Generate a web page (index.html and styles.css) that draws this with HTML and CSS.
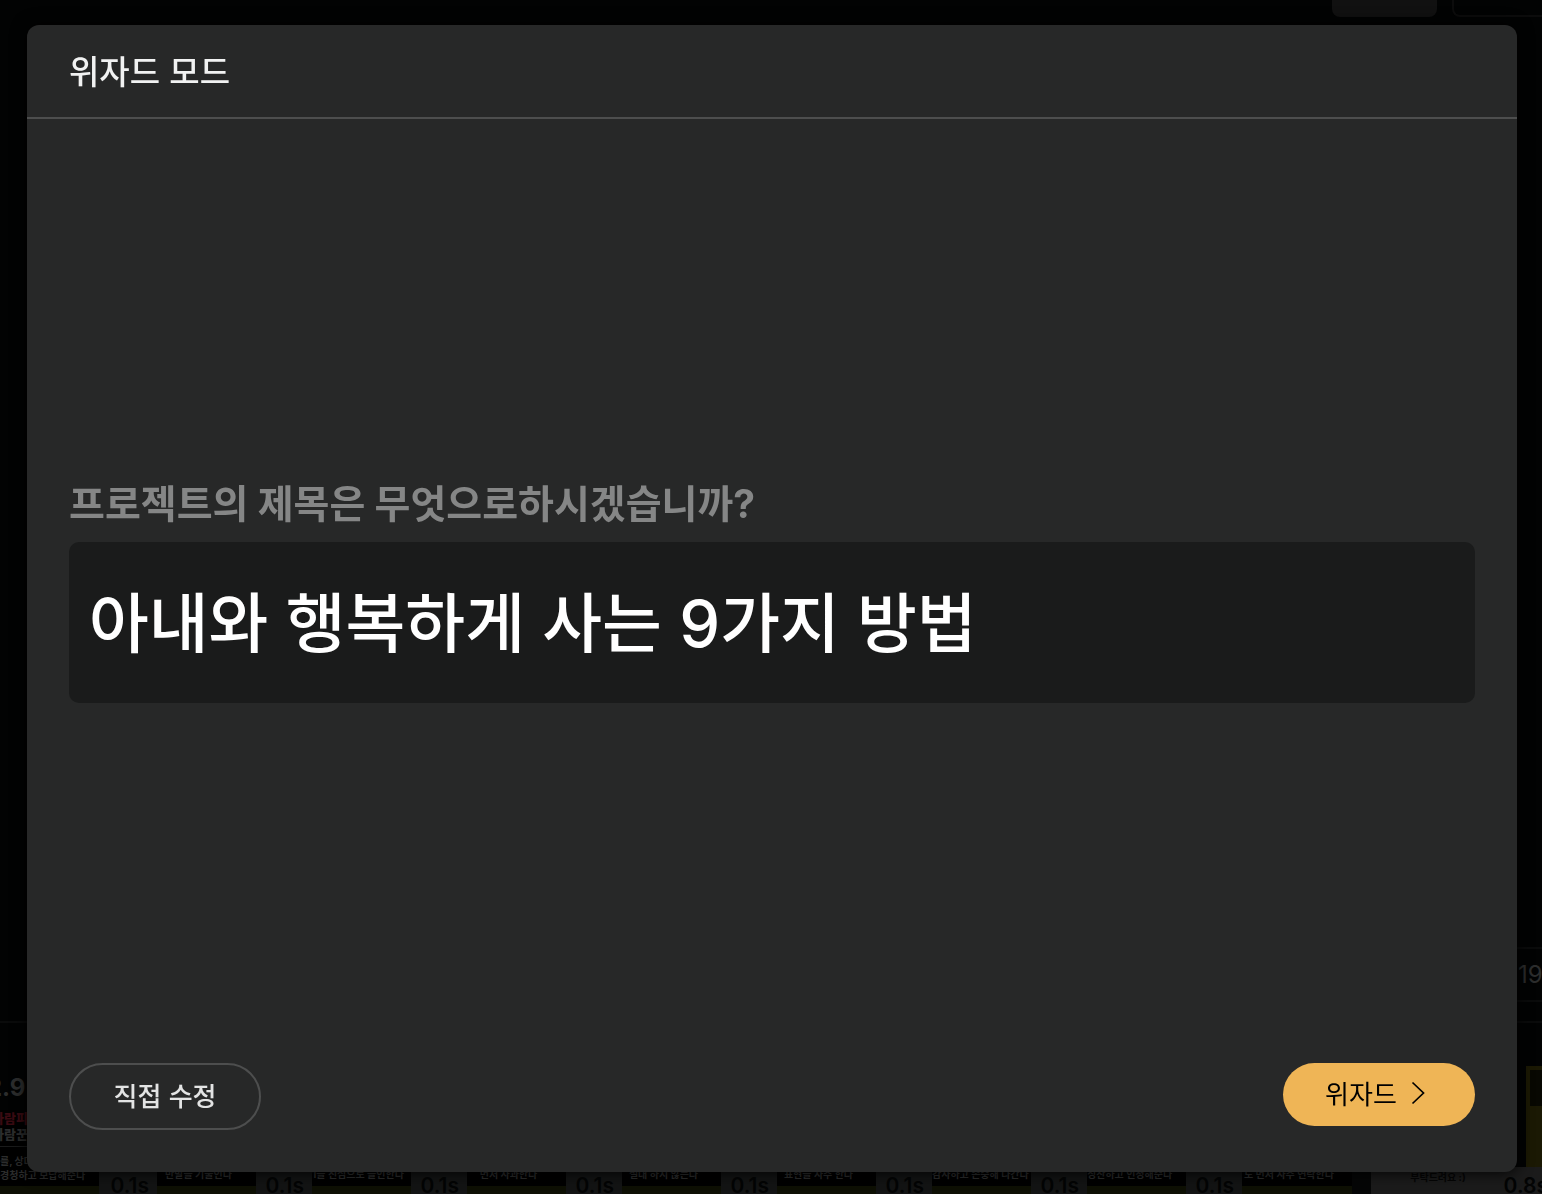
FILE: index.html
```html
<!DOCTYPE html>
<html lang="ko">
<head>
    <meta charset="UTF-8">
    <meta name="viewport" content="width=device-width, initial-scale=1.0">
    <title>위자드 모드</title>
    <link rel="stylesheet" href="styles.css">
</head>
<body>
    <div class="editor" aria-hidden="true">
        <div class="topbar">
            <div class="tool filled"></div>
            <div class="tool"></div>
        </div>
        <div class="canvas"></div>
        <div class="controls"><span class="frame">19</span></div>
        <div class="timeline">
            <div class="clip first">
                <div class="title">2.9</div>
                <div class="thumb">
                    <p class="red">사람피</p>
                    <p class="white">사람꾼</p>
                    <p class="caption">를, 상대<br>경청하고 보답해준다</p>
                </div>
                <span class="time">0.1s</span>
            </div>
            <div class="clip"><div class="thumb"><p class="caption">반말을 기울인다</p></div><span class="time">0.1s</span></div>
            <div class="clip"><div class="thumb"><p class="caption">1을 진심으로 들인한다</p></div><span class="time">0.1s</span></div>
            <div class="clip"><div class="thumb"><p class="caption">먼저 사과한다</p></div><span class="time">0.1s</span></div>
            <div class="clip"><div class="thumb"><p class="caption">절대 하지 않는다</p></div><span class="time">0.1s</span></div>
            <div class="clip"><div class="thumb"><p class="caption">표현을 자주 한다</p></div><span class="time">0.1s</span></div>
            <div class="clip"><div class="thumb"><p class="caption">감사하고 존중해 나간다</p></div><span class="time">0.1s</span></div>
            <div class="clip"><div class="thumb"><p class="caption">칭찬하고 인정해준다</p></div><span class="time">0.1s</span></div>
            <div class="clip last"><div class="thumb"><p class="caption">도 먼저 자주 연락한다</p></div></div>
            <div class="clip end">
                <div class="thumb"><p class="caption">부탁드려요 :)</p></div>
                <span class="time">0.8s</span>
                <div class="selected"></div>
            </div>
        </div>
    </div>

    <div class="modal" role="dialog" aria-labelledby="modalTitle">
        <header class="modal-header">
            <h1 id="modalTitle">위자드 모드</h1>
        </header>
        <form class="modal-body">
            <div class="field">
                <label for="projectTitle">프로젝트의 제목은 무엇으로하시겠습니까?</label>
                <input type="text" id="projectTitle" value="아내와 행복하게 사는 9가지 방법">
            </div>
            <div class="buttons">
                <button type="button" class="outline">직접 수정</button>
                <button type="submit" class="primary">
                    위자드
                    <svg width="14" height="24" viewBox="0 0 14 24" fill="none" stroke="currentColor" stroke-width="1.7">
                        <path d="M1.5 1.5l11 10.5L1.5 22.5"/>
                    </svg>
                </button>
            </div>
        </form>
    </div>
</body>
</html>
```

FILE: styles.css
```css
* {
    box-sizing: border-box;
}
body {
    margin: 0;
    height: 100vh;
    overflow: hidden;
    background: #020303;
    color: #fff;
    font-family: "Noto Sans CJK KR", sans-serif;
}
h1, p {
    margin: 0;
}

/* dimmed editor behind the modal */
.editor {
    height: 100vh;
    display: flex;
    flex-direction: column;
    font-family: Inter, "Noto Sans CJK KR", sans-serif;
    color: #2c2d2d;
}
.topbar {
    display: flex;
    justify-content: flex-end;
    gap: 15px;
    height: 17px;
}
.tool {
    width: 90px;
    border: solid #0c0c0c;
    border-width: 0 0 2px 2px;
    border-radius: 0 0 0 8px;
}
.tool.filled {
    width: 105px;
    background: #111;
    border: none;
    border-radius: 0 0 8px 8px;
}
.canvas {
    flex: 1;
}
.controls {
    display: flex;
    justify-content: flex-end;
    height: 76px;
    border-bottom: 2px solid #0a0b0b;
}
.frame {
    width: 42px;
    height: 55px;
    padding-left: 18px;
    border: solid #0a0b0b;
    border-width: 2px 0;
    font-size: 24px;
    line-height: 52px;
}
.timeline {
    display: flex;
    height: 171px;
    padding-top: 43px;
    overflow: hidden;
}
.clip {
    position: relative;
    flex: none;
    width: 155px;
    background: #131414;
}
.thumb {
    display: flex;
    align-items: flex-end;
    width: 99px;
    height: 120px;
    background: #000;
}
.clip .caption {
    width: 100%;
    padding: 0 16px 5px 0;
    font-size: 10px;
    font-weight: 700;
    line-height: 14px;
    text-align: center;
    white-space: nowrap;
}
.clip::after {
    content: "";
    display: block;
    width: 99px;
    height: 8px;
    background: #0e1004;
}
.time {
    position: absolute;
    right: 8px;
    bottom: -5px;
    color: #030404;
    font-size: 21px;
    font-weight: 600;
    line-height: 26px;
}
.first {
    width: 157px;
}
.first .title {
    height: 44px;
    margin-left: -13px;
    background: #020303;
    font-size: 24px;
    font-weight: 700;
    line-height: 44px;
}
.first .thumb {
    display: block;
    height: 76px;
    font-size: 13px;
    font-weight: 900;
    line-height: 16px;
    white-space: nowrap;
}
.first .red {
    margin-left: -8px;
    color: #3a0b12;
}
.first .white {
    margin-left: -8px;
    padding-bottom: 4px;
    border-bottom: 1px solid #1a1b1b;
}
.first .caption {
    padding-top: 7px;
    text-align: left;
}
.last {
    width: 129px;
    background: #050606;
}
.last .thumb, .last::after {
    width: 110px;
}
.end {
    flex: 1;
    background: #1b1b1b;
}
.end .thumb, .end::after {
    width: 100%;
    background: #1b1b1b;
}
.end .thumb {
    border-top: 101px solid #020303;
}
.end .caption {
    width: 150px;
    padding-bottom: 2px;
    color: #050505;
}
.end .time {
    right: -6px;
}
.end .selected {
    position: absolute;
    top: 0;
    right: 0;
    width: 16px;
    height: 101px;
    background: linear-gradient(#080802, #080802) 4px 4px / 12px 36px no-repeat #1b1904;
}

/* modal */
.modal {
    position: fixed;
    inset: 25px 25px 22px 27px;
    display: flex;
    flex-direction: column;
    background: #272828;
    border-radius: 12px;
    box-shadow: 0 0 16px #000;
}
.modal-header {
    height: 94px;
    padding: 0 42px;
    border-bottom: 2px solid #4d4e4e;
}
.modal-header h1 {
    color: #f1f2f2;
    font-size: 33px;
    font-weight: 500;
    line-height: 90px;
}
.modal-body {
    flex: 1;
    display: flex;
    flex-direction: column;
    padding: 0 42px 42px;
}
.field {
    flex: 1;
    display: flex;
    flex-direction: column;
    justify-content: center;
    padding-bottom: 2px;
}
.field label {
    margin-bottom: 12px;
    color: #858686;
    font-size: 39px;
    font-weight: 700;
    line-height: 52px;
}
.field label, .field input {
    font-family: Inter, "Noto Sans CJK KR", sans-serif;
}
.field input {
    width: 100%;
    height: 161px;
    padding: 0 20px 6px;
    background: #1a1b1b;
    color: #fff;
    border: none;
    border-radius: 10px;
    outline: none;
    font-size: 65px;
    font-weight: 500;
}
.buttons {
    display: flex;
    justify-content: space-between;
    align-items: flex-start;
}
.buttons button {
    display: flex;
    align-items: center;
    justify-content: center;
    width: 192px;
    font-family: inherit;
    font-size: 26px;
    border-radius: 34px;
    cursor: pointer;
}
.outline {
    height: 67px;
    padding: 0 0 4px;
    background: transparent;
    color: #e3e4e4;
    border: 2px solid #4d4e4e;
    font-weight: 500;
}
.primary {
    gap: 14px;
    height: 63px;
    padding: 0 8px 4px 0;
    background: #efb556;
    color: #000;
    border: none;
}
```
